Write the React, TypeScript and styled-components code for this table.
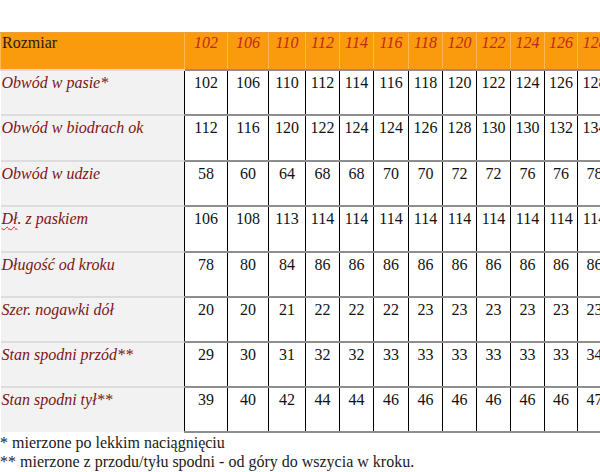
import React from "react";
import styled, { createGlobalStyle } from "styled-components";

const Global = createGlobalStyle`
  html, body { margin: 0; padding: 0; overflow: hidden; background: #fff; }
  body { font-family: "Liberation Serif", "Times New Roman", serif; font-size: 16px; color: #111; }
`;

const Page = styled.div`
  padding-top: 32px;
  width: 600px;
`;

const Table = styled.table`
  border-collapse: collapse;
  table-layout: fixed;
  width: 611px;
  font-size: 16px;
`;

const HeadRow = styled.tr`
  height: 37px;
`;

const HeadCell = styled.th<{ $first?: boolean }>`
  background: #fa9b0d;
  padding: 1px 0 0 ${(p) => (p.$first ? "1px" : "0")};
  vertical-align: top;
  text-align: ${(p) => (p.$first ? "left" : "center")};
  font-weight: normal;
  font-style: ${(p) => (p.$first ? "normal" : "italic")};
  color: ${(p) => (p.$first ? "#2a1a08" : "#c0281c")};
  border-top: 1px solid #e8a040;
  border-left: 1px solid #fdb858;
  border-bottom: 1px solid #e0e0e0;
  white-space: nowrap;
  overflow: hidden;
`;

const LabelCell = styled.td`
  background: #f2f2f2;
  color: #7c1414;
  font-style: italic;
  text-align: left;
  vertical-align: top;
  padding: 3px 0 0 1px;
  border-top: 2px solid #dcdcdc;
  white-space: nowrap;
  overflow: hidden;
`;

const Spell = styled.span`
  text-decoration: underline wavy #d02020;
  text-decoration-thickness: 1px;
  text-underline-offset: 2px;
`;

const ValueCell = styled.td`
  background: #fff;
  color: #111;
  text-align: center;
  vertical-align: top;
  padding: 3px 0 0;
  border-left: 1px solid #000;
  border-right: 1px solid #000;
  border-top: 2px solid #8e8e8e;
  border-bottom: 2px solid #8e8e8e;
  white-space: nowrap;
  overflow: hidden;
`;

const BodyRow = styled.tr<{ $h: number }>`
  height: ${(p) => p.$h}px;
`;

const Notes = styled.div`
  line-height: 19px;
  color: #1a1a1a;
`;

const sizes = ["102", "106", "110", "112", "114", "116", "118", "120", "122", "124", "126", "128"];
const widths = [184, 43, 41, 37, 34, 34, 35, 34, 34, 34, 34, 33, 34];

const rows: { label: React.ReactNode; key: string; values: number[]; h: number }[] = [
  { key: "a", label: "Obwód w pasie*", values: [102, 106, 110, 112, 114, 116, 118, 120, 122, 124, 126, 128], h: 45 },
  { key: "b", label: "Obwód w biodrach ok", values: [112, 116, 120, 122, 124, 124, 126, 128, 130, 130, 132, 134], h: 46 },
  { key: "c", label: "Obwód w udzie", values: [58, 60, 64, 68, 68, 70, 70, 72, 72, 76, 76, 78], h: 45 },
  { key: "d", label: <><Spell>Dł</Spell>. z paskiem</>, values: [106, 108, 113, 114, 114, 114, 114, 114, 114, 114, 114, 114], h: 46 },
  { key: "e", label: "Długość od kroku", values: [78, 80, 84, 86, 86, 86, 86, 86, 86, 86, 86, 86], h: 45 },
  { key: "f", label: "Szer. nogawki dół", values: [20, 20, 21, 22, 22, 22, 23, 23, 23, 23, 23, 23], h: 45 },
  { key: "g", label: "Stan spodni przód**", values: [29, 30, 31, 32, 32, 33, 33, 33, 33, 33, 33, 34], h: 45 },
  { key: "h", label: "Stan spodni tył**", values: [39, 40, 42, 44, 44, 46, 46, 46, 46, 46, 46, 47], h: 45 },
];

export default function App() {
  return (
    <Page>
      <Global />
      <Table>
        <colgroup>
          {widths.map((w, i) => (
            <col key={i} style={{ width: w }} />
          ))}
        </colgroup>
        <thead>
          <HeadRow>
            <HeadCell $first>Rozmiar</HeadCell>
            {sizes.map((s) => (
              <HeadCell key={s}>{s}</HeadCell>
            ))}
          </HeadRow>
        </thead>
        <tbody>
          {rows.map((r) => (
            <BodyRow key={r.key} $h={r.h}>
              <LabelCell>{r.label}</LabelCell>
              {r.values.map((v, i) => (
                <ValueCell key={i}>{v}</ValueCell>
              ))}
            </BodyRow>
          ))}
        </tbody>
      </Table>
      <Notes>
        <div>* mierzone po lekkim naciągnięciu</div>
        <div>** mierzone z przodu/tyłu spodni - od góry do wszycia w kroku.</div>
      </Notes>
    </Page>
  );
}
